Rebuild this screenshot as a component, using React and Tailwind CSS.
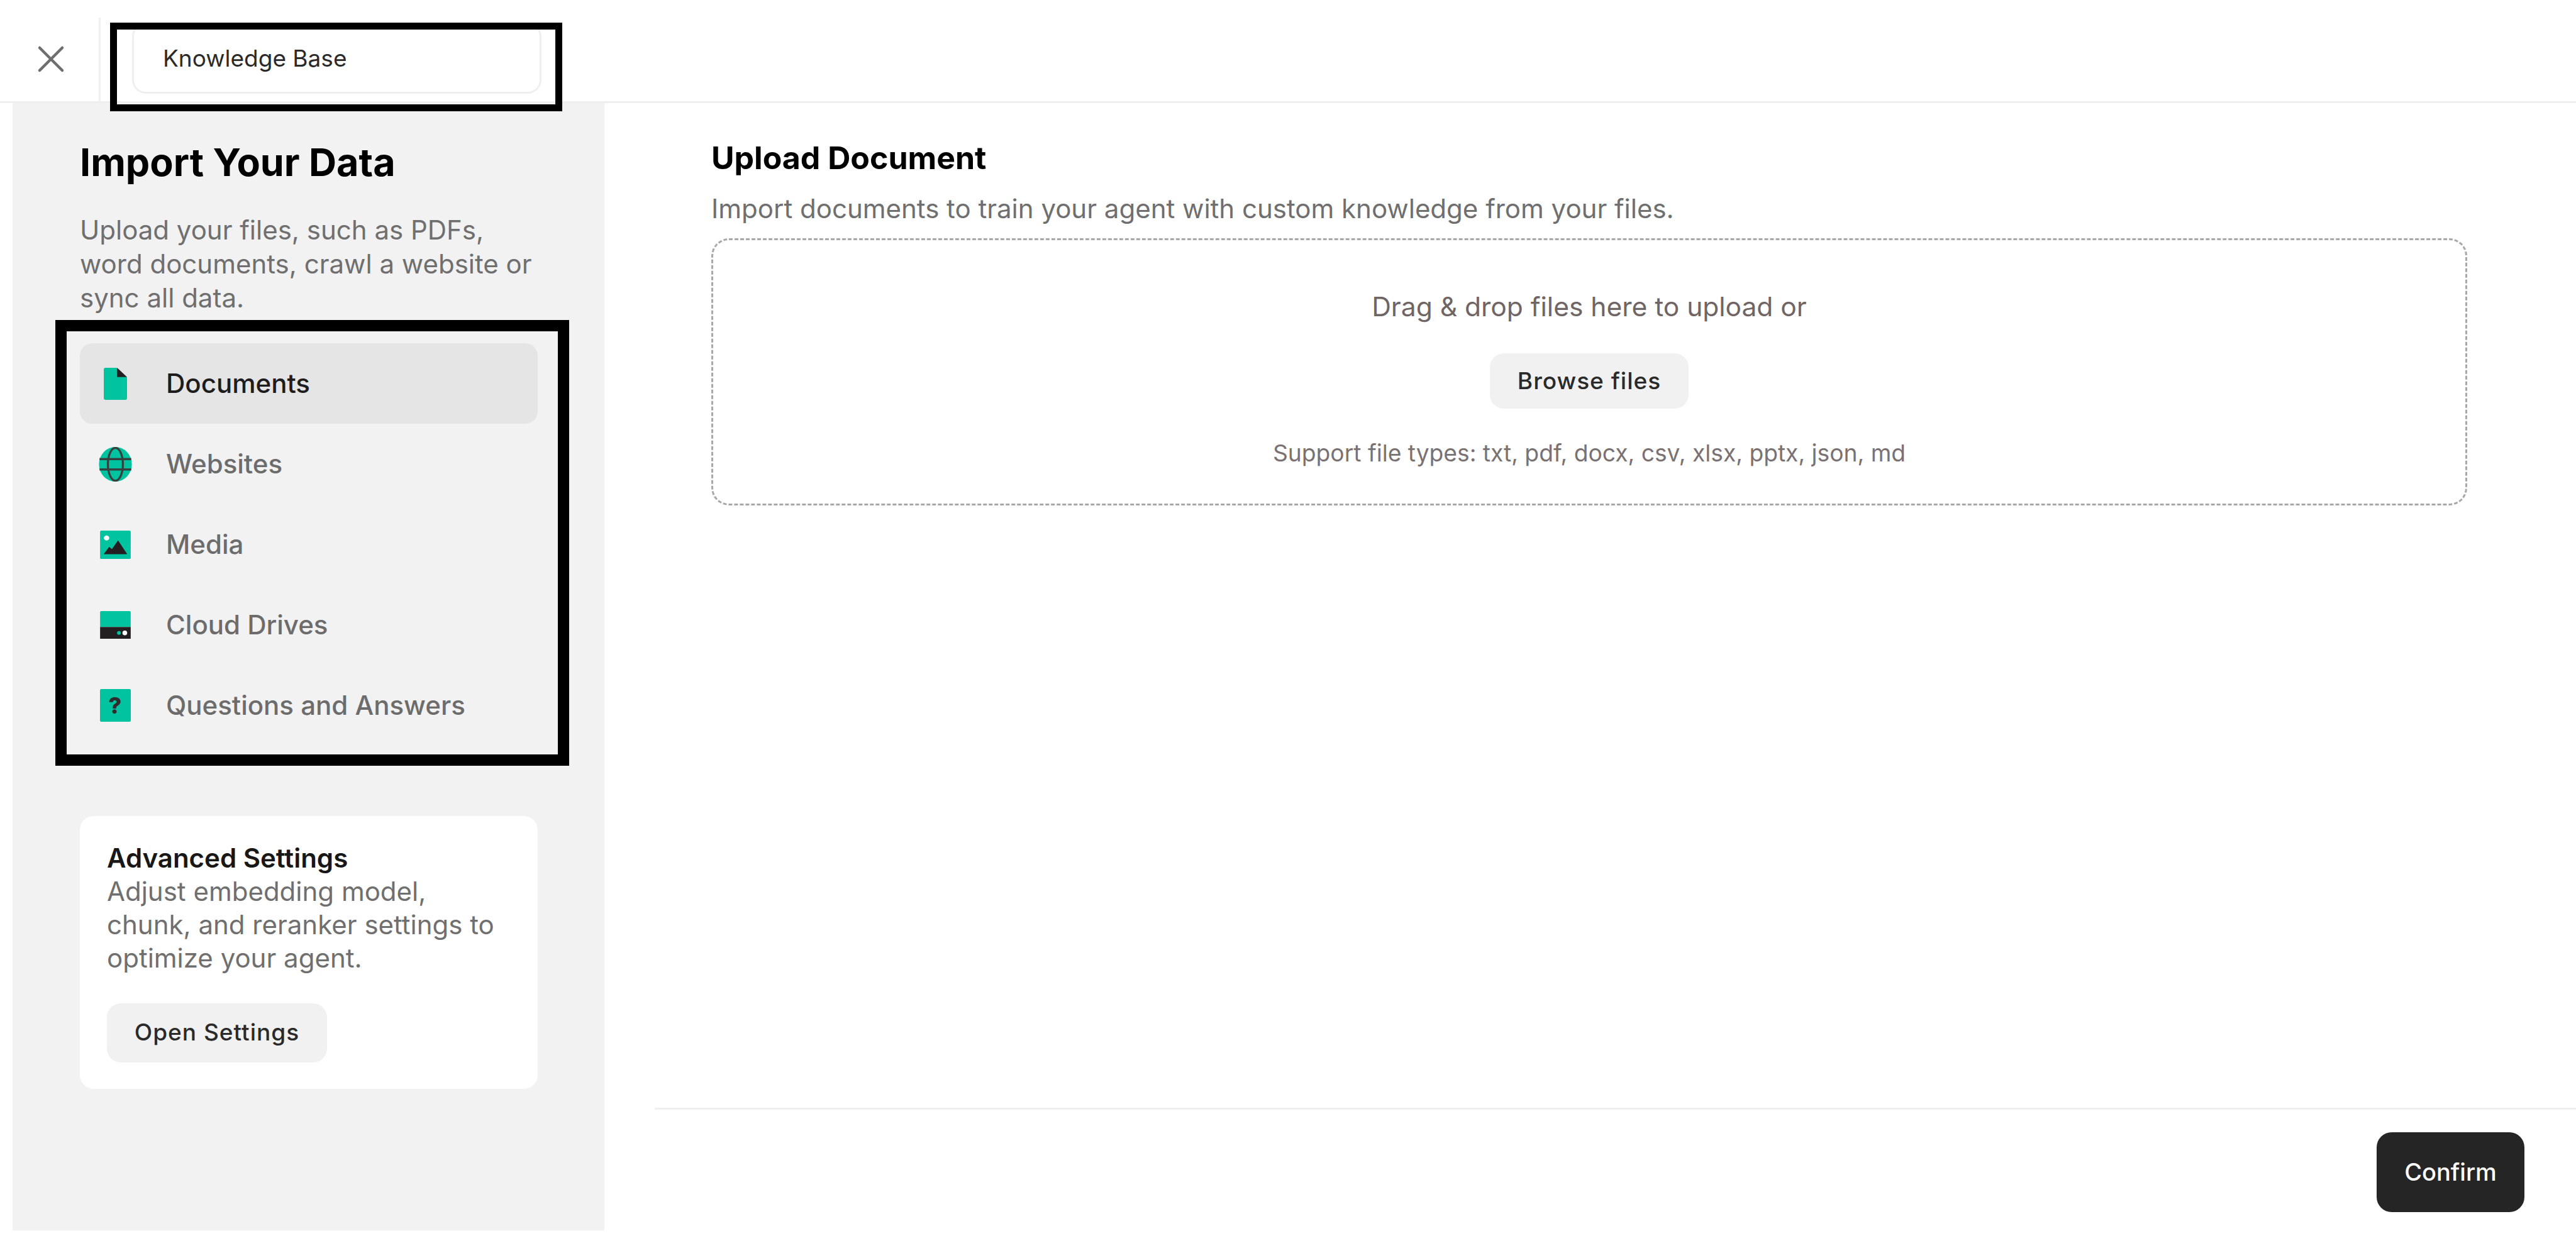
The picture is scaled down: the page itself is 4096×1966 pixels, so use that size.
import React from "react";
import { X } from "lucide-react";

const TEAL = "#00c4a0";
const DARK = "#231f20";

function DocIcon() {
  return (
    <svg width="37" height="51" viewBox="0 0 40 55">
      <path d="M3 0H22L40 17V52a3 3 0 0 1-3 3H3a3 3 0 0 1-3-3V3a3 3 0 0 1 3-3Z" fill={TEAL} />
      <path d="M23 0L40 16H23Z" fill={DARK} />
    </svg>
  );
}

function GlobeIcon() {
  return (
    <svg width="53" height="55" viewBox="0 0 57 60">
      <ellipse cx="28.5" cy="30" rx="28.5" ry="30" fill={TEAL} />
      <g fill="none" stroke="#37403e" strokeWidth="3.6">
        <ellipse cx="28.5" cy="30" rx="13" ry="28.5" />
        <path d="M1 21H56M1 39H56" />
      </g>
    </svg>
  );
}

function MediaIcon() {
  return (
    <svg width="49" height="45" viewBox="0 0 52 48">
      <rect width="52" height="48" rx="2" fill={TEAL} />
      <ellipse cx="11" cy="12.5" rx="4.6" ry="4.2" fill="#ffffff" />
      <path d="M6 40L15.5 27.5L20 31.5L30.5 16.5L46 40Z" fill={DARK} />
    </svg>
  );
}

function CloudIcon() {
  return (
    <svg width="49" height="44" viewBox="0 0 52 47">
      <path d="M2 0H50a2 2 0 0 1 2 2V27H0V2a2 2 0 0 1 2-2Z" fill={TEAL} />
      <rect y="27" width="52" height="20" fill={DARK} />
      <circle cx="32" cy="37" r="3.2" fill={TEAL} />
      <circle cx="42" cy="37" r="4" fill="#ffffff" />
    </svg>
  );
}

function QuestionIcon() {
  return (
    <div className="w-[49px] h-[52px] rounded-[2px] bg-[#00c4a0] flex items-center justify-center text-[#2f2a2d] text-[36px] font-extrabold leading-none">
      ?
    </div>
  );
}

const items = [
  { label: "Documents", Icon: DocIcon, active: true },
  { label: "Websites", Icon: GlobeIcon },
  { label: "Media", Icon: MediaIcon },
  { label: "Cloud Drives", Icon: CloudIcon },
  { label: "Questions and Answers", Icon: QuestionIcon },
];

export default function App() {
  return (
    <div className="relative w-[4096px] h-[1966px] overflow-hidden bg-white flex flex-col font-['Inter',sans-serif]">
      <header className="h-[164px] shrink-0 border-b-[3px] border-[#efefef] flex">
        <div className="w-[157px] shrink-0 flex items-start pl-[45px] pt-[58px]">
          <X size={72} strokeWidth={1.5} className="text-[#6e6e6e]" />
        </div>
        <div className="w-[3px] h-[134px] mt-[28px] shrink-0 bg-[#f0f0f0]" />
        <div className="ml-[50px] mt-[36px] w-[651px] h-[113px] rounded-[22px] border-[3px] border-[#efefef] pl-[46px] pt-[29px] text-[37px] leading-[50px] text-[#2a2a2a]">
          Knowledge Base
        </div>
      </header>

      <div className="flex-1 flex pl-[20px] pb-[9px] min-h-0">
        <aside className="w-[941px] shrink-0 bg-[#f2f2f2] pl-[107px] pr-[106px] pt-[64px]">
          <h1 className="text-[61px] leading-[60px] font-bold text-black">Import Your Data</h1>
          <p className="mt-[51px] text-[42px] leading-[54px] text-[#6f6f6f]">
            Upload your files, such as PDFs, word documents, crawl a website or sync all data.
          </p>
          <nav className="mt-[45px] flex flex-col">
            {items.map(({ label, Icon, active }) => (
              <div
                key={label}
                className={
                  active
                    ? "h-[128px] rounded-[20px] bg-[#e5e5e5] flex items-center text-[#1d1d1d]"
                    : "h-[128px] rounded-[20px] flex items-center text-[#6c6c6c]"
                }
              >
                <div className="w-[112px] shrink-0 flex justify-center">
                  <Icon />
                </div>
                <span className="ml-[25px] text-[42px] font-medium leading-[54px]">{label}</span>
              </div>
            ))}
          </nav>
          <section className="mt-[112px] bg-white rounded-[22px] pl-[43px] pr-[60px] pt-[40px] pb-[42px]">
            <h2 className="text-[42px] leading-[53px] font-semibold text-[#171717]">Advanced Settings</h2>
            <p className="text-[42px] leading-[53px] text-[#6f6f6f]">
              Adjust embedding model, chunk, and reranker settings to optimize your agent.
            </p>
            <button className="mt-[46px] w-[350px] h-[94px] pb-[2px] rounded-[22px] bg-[#f1f1f1] text-[37px] tracking-[1px] font-medium text-[#2a2a2a] flex items-center justify-center">
              Open Settings
            </button>
          </section>
        </aside>

        <main className="flex-1 min-w-0 flex flex-col">
          <div className="flex-1 pl-[170px] pr-[173px] pt-[57px]">
            <h2 className="text-[50px] leading-[60px] font-bold text-black">Upload Document</h2>
            <p className="mt-[24px] text-[42px] leading-[54px] text-[#6f6f6f]">
              Import documents to train your agent with custom knowledge from your files.
            </p>
            <div className="mt-[20px] h-[425px] rounded-[28px] border-[3px] border-dashed border-[#a8a8a8] flex flex-col items-center pt-[79px]">
              <p className="text-[42.5px] leading-[54px] text-[#6f6565]">Drag &amp; drop files here to upload or</p>
              <button className="mt-[47px] w-[316px] h-[88px] rounded-[22px] bg-[#f1f1f1] text-[37px] tracking-[1px] font-medium text-[#2a2a2a] flex items-center justify-center">
                Browse files
              </button>
              <p className="mt-[46px] text-[37.2px] leading-[50px] text-[#7a7272]">
                Support file types: txt, pdf, docx, csv, xlsx, pptx, json, md
              </p>
            </div>
          </div>
          <footer className="ml-[80px] border-t-[3px] border-[#efefef] pt-[36px] pb-[29px] pr-[82px] flex justify-end">
            <button className="w-[235px] h-[127px] rounded-[24px] bg-[#252525] text-white text-[38px] font-medium flex items-center justify-center">
              Confirm
            </button>
          </footer>
        </main>
      </div>

      <div className="absolute left-[175px] top-[36px] w-[719px] h-[141px] border-[11px] border-black pointer-events-none" />
      <div className="absolute left-[88px] top-[509px] w-[817px] h-[709px] border-[18px] border-black pointer-events-none" />
    </div>
  );
}
